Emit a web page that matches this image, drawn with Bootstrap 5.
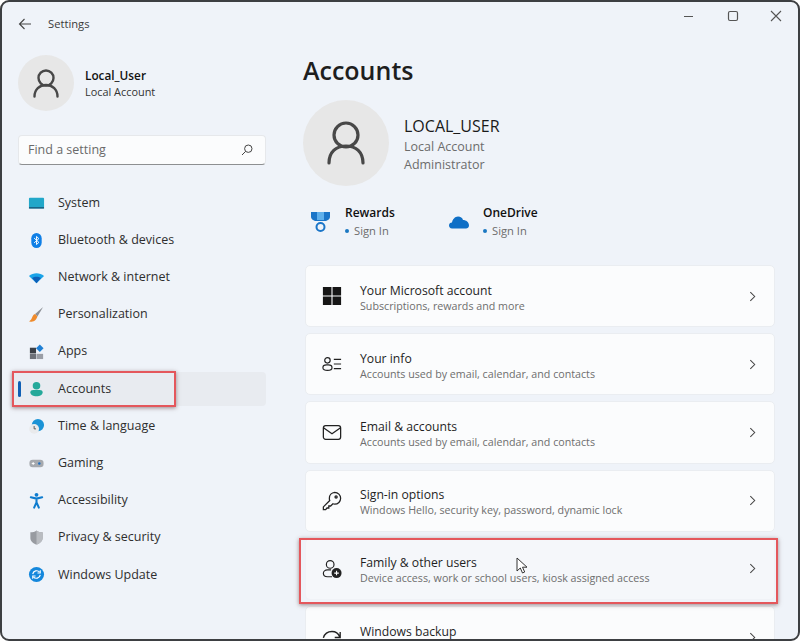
<!DOCTYPE html>
<html lang="en">
<head>
<meta charset="UTF-8">
<meta name="viewport" content="width=device-width, initial-scale=1.0">
<title>Settings</title>
<link href="https://cdn.jsdelivr.net/npm/bootstrap@5.3.2/dist/css/bootstrap.min.css" rel="stylesheet">
<style>
html, body { height: 100%; margin: 0; overflow: hidden; background: #fff; }
body { font-family: "Open Sans", "Noto Sans", sans-serif; color: #1c1c1c; }
.win { position: relative; width: 800px; height: 641px; background: #eff3f9; border: 2px solid #3d3f42; border-radius: 9px; overflow: hidden; }
.title-bar { height: 44px; padding: 0 0 0 16px; flex: none; }
.title-text { font-size: 11.2px; color: #3a3a3a; margin-left: 16px; }
.win-btns { margin-left: auto; }
.win-btn { width: 44px; height: 28px; display: flex; align-items: center; justify-content: center; }
.win-btn:nth-child(2) { margin-left: 1px; margin-right: -1px; }
.body-wrap { min-height: 0; }
.side-pane { width: 301px; flex: none; }
.main-pane { flex: 1; min-width: 0; }
.side-user { margin-top: 9px; }
.side-user-text { margin-left: 11px; }
.avatar-sm { width: 56px; height: 56px; border-radius: 50%; background: #e7e7e7; margin-left: 16px; }
.avatar-lg { width: 86px; height: 86px; border-radius: 50%; background: #e7e7e7; }
.user-name { font-size: 11.8px; font-weight: 600; color: #111; line-height: 17px; }
.user-sub { font-size: 10.9px; color: #333; line-height: 15px; }
.search-box { margin: 24px 34px 0 16px; width: 248px; height: 30px; background: #fbfcfd; border: 1px solid #e6e8eb; border-bottom: 1.5px solid #8d8f91; border-radius: 4px; padding: 0 12px 0 9px; font-size: 12.5px; color: #6a6a6a; }
.menu-list { margin-top: 21px; }
.menu-row { height: 34.2px; margin: 0 34px 3px 10px; width: 254px; padding-left: 16px; border-radius: 4px; font-size: 12.5px; color: #2e2e2e; position: relative; }
.menu-row svg { width: 17px; height: 17px; margin-right: 13px; flex: none; }
.menu-row.on { background: #e8ebf0; }
.menu-row.on::before { content: ""; position: absolute; left: 6px; top: 9px; width: 3px; height: 16px; border-radius: 2px; background: #0f5fb4; }
.page-head { font-size: 25px; font-weight: 600; color: #1e1e1e; line-height: 32px; margin-top: 8px; }
.prof-row { margin-top: 14px; }
.prof-text { margin-left: 15px; padding-top: 4px; }
.prof-name { font-size: 16px; color: #1a1a1a; line-height: 20px; margin-bottom: 2px; }
.prof-sub { font-size: 12.5px; color: #6c6c6c; line-height: 18.5px; }
.svc-row { margin: 18px 0 0 6px; height: 46px; }
.svc-item { width: 138px; }
.svc-medal { flex: none; margin: 7px 14px 0 2px; }
.svc-cloud { flex: none; margin: 11px 14px 0 2px; }
.svc-name { font-size: 12px; font-weight: 600; color: #111; line-height: 18px; }
.svc-sign { font-size: 11.2px; color: #6c6c6c; line-height: 18px; }
.svc-dot { display: inline-block; width: 4px; height: 4px; border-radius: 50%; background: #1a78c2; margin-right: 5px; vertical-align: 2px; }
.opt-list { margin-top: 15px; width: 470px; margin-left: 2px; }
.opt-card { height: 62.2px; margin-bottom: 6px; background: #fbfcfd; border: 1px solid #eaedf1; border-radius: 5px; padding: 0 18px 0 16px; }
.opt-card.hov { background: #f5f7fa; border-color: #f0f2f6; }
.opt-ico { width: 20px; height: 20px; margin-right: 18px; flex: none; }
.opt-text { padding-top: 3px; }
.opt-title { font-size: 12.2px; color: #1f1f1f; line-height: 17px; }
.opt-sub { font-size: 10.7px; color: #6e6e6e; line-height: 15px; min-height: 15px; }
.opt-chev { margin-left: auto; }
.mark-box { position: absolute; border: 2px solid #e4575c; box-shadow: 0 1px 4px rgba(70,30,30,.5); }
.mark-side { left: 10px; top: 369px; width: 164px; height: 36px; }
.mark-opt { left: 297px; top: 536px; width: 479px; height: 66px; }
.ptr { position: absolute; left: 514px; top: 555px; }
</style>
</head>
<body>
<div class="win d-flex flex-column">
  <div class="title-bar d-flex align-items-center">
    <svg width="14" height="12" viewBox="0 0 14 12" fill="none" stroke="#444" stroke-width="1.1"><path d="M13 6H1.500M6.500 1 1.500 6l5 5"/></svg>
    <span class="title-text">Settings</span>
    <div class="win-btns d-flex align-self-start">
      <div class="win-btn"><svg width="12" height="12" viewBox="0 0 12 12"><path d="M2 6.500h9" stroke="#555" stroke-width="1.200"/></svg></div>
      <div class="win-btn"><svg width="12" height="12" viewBox="0 0 12 12"><rect x="1.500" y="1.500" width="9" height="9" rx="1.500" fill="none" stroke="#555" stroke-width="1.200"/></svg></div>
      <div class="win-btn"><svg width="12" height="12" viewBox="0 0 12 12"><path d="M1 1l10 10M11 1 1 11" stroke="#555" stroke-width="1.100"/></svg></div>
    </div>
  </div>
  <div class="body-wrap d-flex flex-grow-1">
    <div class="side-pane">
      <div class="side-user d-flex align-items-center">
        <div class="avatar-sm d-flex align-items-center justify-content-center">
          <svg width="26" height="29" viewBox="0 0 26 29" fill="none" stroke="#484848" stroke-width="2.400" stroke-linecap="round"><circle cx="13" cy="9" r="7.500"/><path d="M1.500 27.500c0-7 5-11.500 11.500-11.500s11.500 4.500 11.500 11.500"/></svg>
        </div>
        <div class="side-user-text">
          <div class="user-name">Local_User</div>
          <div class="user-sub">Local Account</div>
        </div>
      </div>
      <div class="search-box d-flex align-items-center justify-content-between">
        <span>Find a setting</span>
        <svg width="12" height="12" viewBox="0 0 12 12" fill="none" stroke="#444" stroke-width="1"><circle cx="7.300" cy="4.700" r="3.700"/><path d="M4.600 7.400 1 11"/></svg>
      </div>
      <div class="menu-list">
        <div class="menu-row d-flex align-items-center"><svg viewBox="0 0 18 18"><rect x="1" y="3" width="16" height="11" rx="1" fill="#22a7c9"/><rect x="1" y="12.800" width="16" height="1.600" fill="#175f80"/></svg>System</div>
        <div class="menu-row d-flex align-items-center"><svg viewBox="0 0 18 18"><rect x="3.500" y="1" width="11" height="16" rx="5.500" fill="#0f7fe6"/><path d="M6.500 6.500l5 4.500L9 13.300V4.700L11.500 7l-5 4.500" fill="none" stroke="#fff" stroke-width="1"/></svg>Bluetooth &amp; devices</div>
        <div class="menu-row d-flex align-items-center"><svg viewBox="0 0 18 18"><path d="M1 7.500C5.500 3.500 12.500 3.500 17 7.500L9 15z" fill="#1aa3e8"/><path d="M4.300 9.600C7 7.600 11 7.600 13.700 9.600L9 15z" fill="#0d5fb8"/></svg>Network &amp; internet</div>
        <div class="menu-row d-flex align-items-center"><svg viewBox="0 0 18 18"><path d="M16 1 7.500 8.500l2.500 2.500z" fill="#8d9096"/><path d="M7.500 8.500C5.500 9 5 11 4 13 3.300 14.400 2.500 15.500 1 16.500c3.500.6 7.500-.5 9-5.500z" fill="#ef8b2c"/></svg>Personalization</div>
        <div class="menu-row d-flex align-items-center"><svg viewBox="0 0 18 18"><rect x="2" y="5" width="6.500" height="6" fill="#3b3f46"/><rect x="2" y="11.500" width="6.500" height="5.500" fill="#6d7179"/><rect x="9" y="11.500" width="7" height="5.500" fill="#9a9ea6"/><path d="M12.500 1.500l4 4-4 4-4-4z" fill="#1f7fd4"/></svg>Apps</div>
        <div class="menu-row on d-flex align-items-center"><svg viewBox="0 0 18 18"><circle cx="9" cy="5" r="4" fill="#25a99a"/><path d="M2.500 12c0-1.700 1.300-2.500 3-2.500h7c1.700 0 3 .8 3 2.500 0 2.700-3 4.200-6.500 4.200S2.500 14.700 2.500 12z" fill="#25a99a"/></svg>Accounts</div>
        <div class="menu-row d-flex align-items-center"><svg viewBox="0 0 18 18"><circle cx="10.500" cy="7.500" r="6.500" fill="#1b93d6"/><circle cx="6.500" cy="11.500" r="5.200" fill="#e9eaec"/><path d="M6.500 8.500v3h2" fill="none" stroke="#555" stroke-width="1"/></svg>Time &amp; language</div>
        <div class="menu-row d-flex align-items-center"><svg viewBox="0 0 18 18"><rect x="1.500" y="5" width="15" height="8" rx="3.500" fill="#a6a9ae"/><path d="M4 9h3M5.500 7.500v3" stroke="#fff" stroke-width="1"/><circle cx="12" cy="9" r="1.300" fill="#1f6fc0"/></svg>Gaming</div>
        <div class="menu-row d-flex align-items-center"><svg viewBox="0 0 18 18"><circle cx="9" cy="3" r="2" fill="#0f7ccf"/><path d="M3 5.500 9 7l6-1.500M9 7v4M9 11l-2.500 5.500M9 11l2.500 5.500" fill="none" stroke="#0f7ccf" stroke-width="2.200" stroke-linecap="round"/></svg>Accessibility</div>
        <div class="menu-row d-flex align-items-center"><svg viewBox="0 0 18 18"><path d="M9 1.500c2 1.500 4 2 6.500 2v6c0 3.500-3 5.800-6.500 7-3.500-1.200-6.500-3.500-6.500-7v-6C5 3.500 7 3 9 1.500z" fill="#989ba1"/><path d="M9 1.500c2 1.500 4 2 6.500 2v6c0 3.500-3 5.800-6.500 7z" fill="#b9bcc1"/></svg>Privacy &amp; security</div>
        <div class="menu-row d-flex align-items-center"><svg viewBox="0 0 18 18"><circle cx="9" cy="9" r="8" fill="#1487dc"/><path d="M5 8.500A4.200 4.200 0 0 1 12.300 6.500M13 9.500A4.200 4.200 0 0 1 5.700 11.500" fill="none" stroke="#fff" stroke-width="1.300"/><path d="M13 4.500v3h-3M5 13.500v-3h3" fill="none" stroke="#fff" stroke-width="1.100"/></svg>Windows Update</div>
      </div>
    </div>
    <div class="main-pane">
      <div class="page-head">Accounts</div>
      <div class="prof-row d-flex align-items-center">
        <div class="avatar-lg d-flex align-items-center justify-content-center">
          <svg width="38" height="44" viewBox="0 0 38 44" fill="none" stroke="#484848" stroke-width="3.200" stroke-linecap="round"><circle cx="19" cy="14" r="12"/><path d="M2 42c0-11 7-17 17-17s17 6 17 17"/></svg>
        </div>
        <div class="prof-text">
          <div class="prof-name">LOCAL_USER</div>
          <div class="prof-sub">Local Account</div>
          <div class="prof-sub">Administrator</div>
        </div>
      </div>
      <div class="svc-row d-flex">
        <div class="svc-item d-flex">
          <svg class="svc-medal" width="20" height="22" viewBox="0 0 20 22"><path d="M0 1h19v5c0 2-2 3-4 4H4C2 9 0 8 0 6z" fill="#1b75c8"/><path d="M6 1h7v8H6z" fill="#5fb0ec"/><circle cx="9.500" cy="16" r="4" fill="none" stroke="#1b75c8" stroke-width="2"/></svg>
          <div><div class="svc-name">Rewards</div><div class="svc-sign"><span class="svc-dot"></span>Sign In</div></div>
        </div>
        <div class="svc-item d-flex">
          <svg class="svc-cloud" width="20" height="14" viewBox="0 0 20 14"><path d="M3 13.500C1 13.500 0 12 0 10.500 0 8.800 1.300 7.500 3 7.500c.4-3 3-6 6-6 2.500 0 4.500 1.500 5 3.500 3 0 6 2.200 6 5.500 0 2-1.500 3-3 3z" fill="#0f6fc6"/></svg>
          <div><div class="svc-name">OneDrive</div><div class="svc-sign"><span class="svc-dot"></span>Sign In</div></div>
        </div>
      </div>
      <div class="opt-list">
        <div class="opt-card d-flex align-items-center">
          <svg class="opt-ico" viewBox="0 0 22 22"><path d="M1 1h9.400v9.400H1zM11.600 1H21v9.400h-9.400zM1 11.600h9.400V21H1zM11.600 11.600H21V21h-9.400z" fill="#161616"/></svg>
          <div class="opt-text"><div class="opt-title">Your Microsoft account</div><div class="opt-sub">Subscriptions, rewards and more</div></div>
          <svg class="opt-chev" width="7" height="11" viewBox="0 0 8 12" fill="none" stroke="#444" stroke-width="1.200"><path d="M1.500 1l5 5-5 5"/></svg>
        </div>
        <div class="opt-card d-flex align-items-center">
          <svg class="opt-ico" viewBox="0 0 22 22" fill="none" stroke="#222" stroke-width="1.300"><circle cx="6" cy="7" r="3"/><path d="M5 12h2c2 0 4 1 4 3s-2 3-5 3-5-1-5-3 2-3 4-3zM13 6h8M13 11h8M13 16h8"/></svg>
          <div class="opt-text"><div class="opt-title">Your info</div><div class="opt-sub">Accounts used by email, calendar, and contacts</div></div>
          <svg class="opt-chev" width="7" height="11" viewBox="0 0 8 12" fill="none" stroke="#444" stroke-width="1.200"><path d="M1.500 1l5 5-5 5"/></svg>
        </div>
        <div class="opt-card d-flex align-items-center">
          <svg class="opt-ico" viewBox="0 0 22 22" fill="none" stroke="#222" stroke-width="1.400"><rect x="1.500" y="4" width="19" height="15" rx="2.500"/><path d="M2 6.500 11 13l9-6.500"/></svg>
          <div class="opt-text"><div class="opt-title">Email &amp; accounts</div><div class="opt-sub">Accounts used by email, calendar, and contacts</div></div>
          <svg class="opt-chev" width="7" height="11" viewBox="0 0 8 12" fill="none" stroke="#444" stroke-width="1.200"><path d="M1.500 1l5 5-5 5"/></svg>
        </div>
        <div class="opt-card d-flex align-items-center">
          <svg class="opt-ico" viewBox="0 0 22 22" fill="none" stroke="#222" stroke-width="1.400"><path d="M14 1.500a6.500 6.500 0 0 1 0 13c-.8 0-1.500-.1-2-.4L9.500 16.500H7.500v2.200H5.500L4 20.500H1.500v-3l7-7c-.3-.7-.4-1.400-.4-2.500A6.500 6.500 0 0 1 14 1.500z"/><circle cx="15.500" cy="6.500" r="1.200"/></svg>
          <div class="opt-text"><div class="opt-title">Sign-in options</div><div class="opt-sub">Windows Hello, security key, password, dynamic lock</div></div>
          <svg class="opt-chev" width="7" height="11" viewBox="0 0 8 12" fill="none" stroke="#444" stroke-width="1.200"><path d="M1.500 1l5 5-5 5"/></svg>
        </div>
        <div class="opt-card hov d-flex align-items-center">
          <svg class="opt-ico" viewBox="0 0 22 22"><g fill="none" stroke="#222" stroke-width="1.300"><circle cx="9" cy="6" r="4.200"/><path d="M10 12H6c-2.500 0-4.500 1.500-4.500 3.700S3.500 19.500 6 19.500h5"/></g><circle cx="16" cy="15.500" r="5.500" fill="#222"/><path d="M13.500 15.500h5M16 13v5" stroke="#fff" stroke-width="1.200"/></svg>
          <div class="opt-text"><div class="opt-title">Family &amp; other users</div><div class="opt-sub">Device access, work or school users, kiosk assigned access</div></div>
          <svg class="opt-chev" width="7" height="11" viewBox="0 0 8 12" fill="none" stroke="#444" stroke-width="1.200"><path d="M1.500 1l5 5-5 5"/></svg>
        </div>
        <div class="opt-card d-flex align-items-center">
          <svg class="opt-ico" viewBox="0 0 22 22" fill="none" stroke="#222" stroke-width="1.500"><path d="M1.500 12C3 7 7 5 11 5s7 2 8.500 6M20 5.500V11.500h-6"/><path d="M7 19h9" stroke-width="3"/></svg>
          <div class="opt-text"><div class="opt-title">Windows backup</div><div class="opt-sub"></div></div>
          <svg class="opt-chev" width="7" height="11" viewBox="0 0 8 12" fill="none" stroke="#444" stroke-width="1.200"><path d="M1.500 1l5 5-5 5"/></svg>
        </div>
      </div>
    </div>
  </div>
  <div class="mark-box mark-side"></div>
  <div class="mark-box mark-opt"></div>
  <svg class="ptr" width="13" height="18" viewBox="0 0 13 18"><path d="M1 1v13l3.300-3 2.200 5 2.200-1-2.200-4.800H11z" fill="#fff" stroke="#333" stroke-width="1"/></svg>
</div>
<script src="https://cdn.jsdelivr.net/npm/bootstrap@5.3.2/dist/js/bootstrap.bundle.min.js"></script>
</body>
</html>
